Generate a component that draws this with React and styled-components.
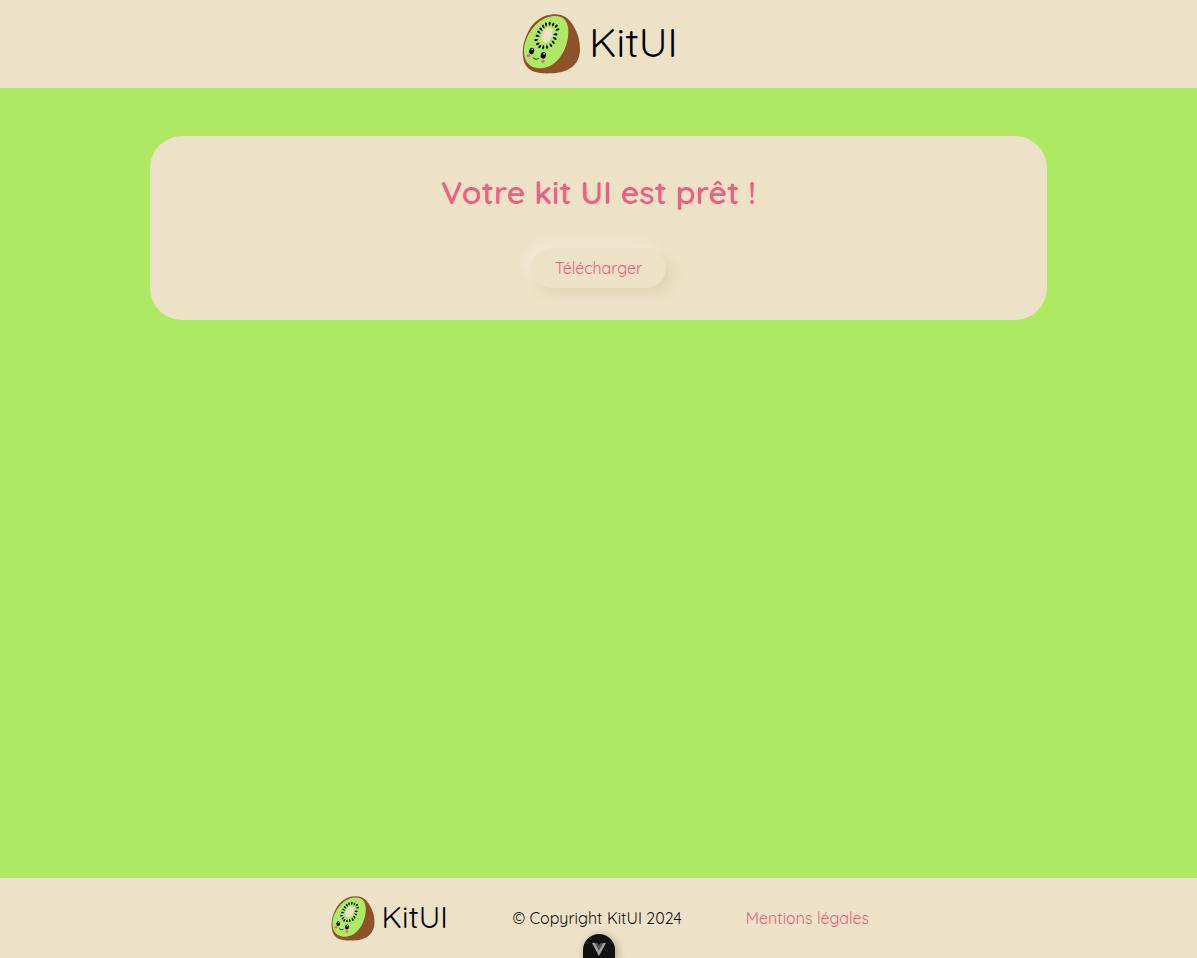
import React from 'react';
import styled, { createGlobalStyle } from 'styled-components';

const Global = createGlobalStyle`
  * { box-sizing: border-box; }
  body { margin: 0; background: #aee963; font-family: Quicksand, Lato, sans-serif; font-size: 16px; color: #111; }
`;
const Page = styled.div`
  min-height: 100vh;
  display: flex;
  flex-direction: column;
`;
const Header = styled.header`
  height: 88px;
  padding: 1px 0 0 2px;
  display: flex;
  align-items: center;
  justify-content: center;
  background: #ede1c7;
`;
const Main = styled.main`
  flex: 1;
  padding: 48px 150px;
`;
const Card = styled.section`
  height: 184px;
  padding: 36px 32px 32px;
  border-radius: 32px;
  background: #ede1c7;
  display: flex;
  flex-direction: column;
  align-items: center;
  justify-content: space-between;
`;
const Title = styled.h1`
  margin: 0;
  font-size: 32px;
  line-height: 40px;
  font-weight: 600;
  white-space: nowrap;
  color: #ef5f80;
`;
const Button = styled.button`
  height: 40px;
  padding: 0 24px;
  border: 0;
  border-radius: 20px;
  background: #ede1c7;
  box-shadow: 6px 6px 12px #e1d4b6, -6px -6px 12px #f4ead7;
  color: #ef5f80;
  font: inherit;
`;
const Footer = styled.footer`
  position: relative;
  height: 80px;
  padding-left: 3px;
  display: flex;
  align-items: center;
  justify-content: center;
  gap: 64px;
  background: #ede1c7;
`;
const FooterBrand = styled.div`
  padding: 1px 1.5px 0 0;
`;
const Note = styled.span`
  white-space: nowrap;
`;
const Link = styled.a`
  white-space: nowrap;
  color: #ef5f80;
`;
const Tab = styled.div`
  position: absolute;
  left: 583px;
  bottom: 0;
  width: 32px;
  height: 24px;
  border-radius: 16px 16px 0 0;
  background: #111;
  box-shadow: 2px 2px 8px rgba(0, 0, 0, 0.3);
  display: flex;
  justify-content: center;
  padding-top: 9px;
`;
const LogoSvg = styled.svg`
  display: block;
  flex: none;
  overflow: visible;
`;
const Wordmark = styled.text`
  font-family: Quicksand, Lato, sans-serif;
  font-size: 121px;
  font-weight: 400;
  fill: #000;
`;

const seeds = [
  [94, 59, -5], [105, 57, 5], [115, 59, 20], [124, 64, 40], [128, 74, 65], [122, 88, 90], [120, 100, 115],
  [115, 111, 140], [108, 120, 150], [97, 125, 175], [86, 126, 195], [76, 124, 215], [70, 116, 235],
  [65, 105, 260], [69, 93, 285], [73, 82, 300], [79, 73, 315], [86, 65, 330],
];

function Logo({ width, height }) {
  return (
    <LogoSvg width={width} height={height} viewBox="22 27 464 181" role="img" aria-label="KitUI">
      <path d="M117 28C145 27 164 40 177 64C190 86 196 108 196 133C196 178 162 205 110 205C73 206 42 203 30 175C20 148 23 112 42 77C58 48 86 29 117 28Z" fill="#8e5228" />
      <path d="M117 33C145 31 160 46 161 76C163 128 129 190 77 190C46 190 28 170 28 140C28 92 68 36 117 33Z" fill="#aee963" />
      <ellipse cx="97" cy="90" rx="15" ry="24" transform="rotate(27 97 90)" fill="#ede1c7" />
      {seeds.map(([x, y, a]) => (
        <path key={a} d="M0-6Q5 1 2 5Q0 7-3 4Q-4 0 0-6Z" transform={`translate(${x} ${y}) rotate(${a + 180}) scale(1.12)`} fill="#080a06" />
      ))}
      <ellipse cx="42" cy="152" rx="6" ry="5" fill="#ef6d7b" />
      <ellipse cx="85" cy="169" rx="5.5" ry="5.5" fill="#ef6d7b" />
      <ellipse cx="51" cy="138" rx="7.5" ry="10" transform="rotate(12 51 138)" fill="#080808" />
      <ellipse cx="86" cy="151" rx="8" ry="10" transform="rotate(12 86 151)" fill="#080808" />
      <circle cx="53" cy="133" r="2.8" fill="#fff" />
      <circle cx="89" cy="146" r="2.8" fill="#fff" />
      <path d="M55 158Q60 166 71 161" fill="none" stroke="#111" strokeWidth="2.5" strokeLinecap="round" />
      <Wordmark x="224" y="155">KitUI</Wordmark>
    </LogoSvg>
  );
}

export default function App() {
  return (
    <Page>
      <Global />
      <Header><Logo width={154.67} height={60.33} /></Header>
      <Main>
        <Card>
          <Title>Votre kit UI est prêt !</Title>
          <Button>Télécharger</Button>
        </Card>
      </Main>
      <Footer>
        <FooterBrand><Logo width={116} height={45.25} /></FooterBrand>
        <Note>© Copyright KitUI 2024</Note>
        <Link>Mentions légales</Link>
        <Tab>
          <svg width="14" height="13" viewBox="0 0 14 13">
            <path d="M0 0H3L7 7L11 0H14L7 13Z" fill="#a0a0a0" />
            <path d="M3 0H5.5L7 2.6L8.500 0H11L7 7Z" fill="#555" />
          </svg>
        </Tab>
      </Footer>
    </Page>
  );
}
